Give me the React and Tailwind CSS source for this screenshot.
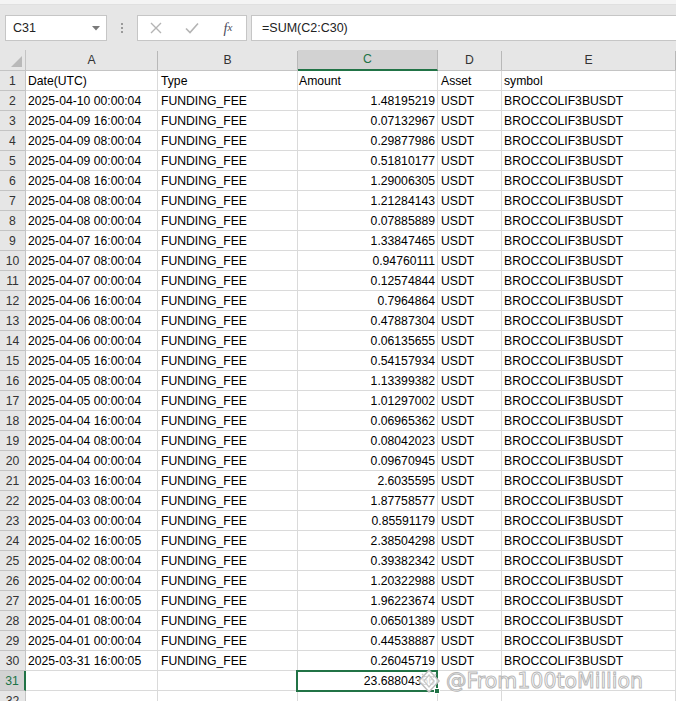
import React from "react";

const data = [
  ["2025-04-10 00:00:04", "1.48195219"],
  ["2025-04-09 16:00:04", "0.07132967"],
  ["2025-04-09 08:00:04", "0.29877986"],
  ["2025-04-09 00:00:04", "0.51810177"],
  ["2025-04-08 16:00:04", "1.29006305"],
  ["2025-04-08 08:00:04", "1.21284143"],
  ["2025-04-08 00:00:04", "0.07885889"],
  ["2025-04-07 16:00:04", "1.33847465"],
  ["2025-04-07 08:00:04", "0.94760111"],
  ["2025-04-07 00:00:04", "0.12574844"],
  ["2025-04-06 16:00:04", "0.7964864"],
  ["2025-04-06 08:00:04", "0.47887304"],
  ["2025-04-06 00:00:04", "0.06135655"],
  ["2025-04-05 16:00:04", "0.54157934"],
  ["2025-04-05 08:00:04", "1.13399382"],
  ["2025-04-05 00:00:04", "1.01297002"],
  ["2025-04-04 16:00:04", "0.06965362"],
  ["2025-04-04 08:00:04", "0.08042023"],
  ["2025-04-04 00:00:04", "0.09670945"],
  ["2025-04-03 16:00:04", "2.6035595"],
  ["2025-04-03 08:00:04", "1.87758577"],
  ["2025-04-03 00:00:04", "0.85591179"],
  ["2025-04-02 16:00:05", "2.38504298"],
  ["2025-04-02 08:00:04", "0.39382342"],
  ["2025-04-02 00:00:04", "1.20322988"],
  ["2025-04-01 16:00:05", "1.96223674"],
  ["2025-04-01 08:00:04", "0.06501389"],
  ["2025-04-01 00:00:04", "0.44538887"],
  ["2025-03-31 16:00:05", "0.26045719"],
];

const cellBase =
  "h-[20px] pt-[1px] border-r border-b border-[#dadada] flex items-center whitespace-nowrap overflow-hidden shrink-0";

function RowHeader({ n, selected }) {
  return selected ? (
    <div className="w-[26px] h-[20px] pt-[1px] shrink-0 bg-[#d2d2d2] border-r-2 border-[#217346] border-b border-b-[#c6c6c6] flex items-center justify-center text-[#217346]">
      {n}
    </div>
  ) : (
    <div className="w-[26px] h-[20px] pt-[1px] shrink-0 bg-[#e6e6e6] border-r border-b border-[#c4c4c4] flex items-center justify-center text-[#333]">
      {n}
    </div>
  );
}

function Row({ n, a, b, c, d, e, selected }) {
  return (
    <div className="flex">
      <RowHeader n={n} selected={selected} />
      <div className={`${cellBase} w-[132px] pl-[2px]`}>{a}</div>
      <div className={`${cellBase} w-[140px] pl-[3px]`}>{b}</div>
      <div className={`${cellBase} w-[140px] justify-end pr-[2px]`}>{c}</div>
      <div className={`${cellBase} w-[64px] pl-[3px]`}>{d}</div>
      <div className={`${cellBase} w-[174px] pl-[2px]`}>{e}</div>
    </div>
  );
}

function ColHeader({ w, label, selected }) {
  return selected ? (
    <div
      className={`${w} h-[21px] shrink-0 bg-[#d2d2d2] border-r border-[#b8b8b8] border-b-2 border-b-[#217346] flex items-center justify-center text-[#217346]`}
    >
      {label}
    </div>
  ) : (
    <div
      className={`${w} h-[21px] shrink-0 flex items-end border-b border-[#c4c4c4]`}
    >
      <div className="w-full h-[19px] border-r border-[#b8b8b8] flex items-center justify-center text-[#333]">
        {label}
      </div>
    </div>
  );
}

export default function App() {
  return (
    <div
      className="w-[676px] h-[701px] overflow-hidden bg-white text-[12.2px] text-black"
      style={{ fontFamily: '"Liberation Sans", Arial, sans-serif' }}
    >
      {/* top strip */}
      <div className="h-[5px] bg-[#f4f4f4] border-b border-[#e0e0e0]" />
      {/* formula bar */}
      <div className="h-[45px] bg-[#e6e6e6] flex items-start pt-[10px] text-[12.5px]">
        <div className="ml-[5px] w-[102px] h-[26px] bg-white border border-[#c6c6c6] flex items-center justify-between pl-[7px] pr-[6px] text-[#222]">
          <span>C31</span>
          <svg width="8" height="5" viewBox="0 0 8 5">
            <path d="M0 0 L8 0 L4 4.5 Z" fill="#7a7a7a" />
          </svg>
        </div>
        <div className="w-[30px] h-[26px] flex flex-col items-center justify-center gap-[2px]">
          <div className="w-[2px] h-[2px] bg-[#9a9a9a]" />
          <div className="w-[2px] h-[2px] bg-[#9a9a9a]" />
          <div className="w-[2px] h-[2px] bg-[#9a9a9a]" />
        </div>
        <div className="w-[110px] h-[26px] bg-white border border-[#c6c6c6] flex items-center">
          <div className="w-[36px] flex justify-center">
            <svg width="12" height="12" viewBox="0 0 12 12">
              <path d="M1 1 L11 11 M11 1 L1 11" stroke="#b4b4b4" strokeWidth="1.4" />
            </svg>
          </div>
          <div className="w-[36px] flex justify-center">
            <svg width="14" height="12" viewBox="0 0 14 12">
              <path d="M1 6.5 L5 10.5 L13 1.5" stroke="#b4b4b4" strokeWidth="1.6" fill="none" />
            </svg>
          </div>
          <div
            className="w-[36px] flex justify-center italic text-[14px] text-[#4a4a5a]"
            style={{ fontFamily: '"Liberation Serif", serif' }}
          >
            f<span className="text-[11px] relative top-[1px]">x</span>
          </div>
        </div>
        <div className="ml-[4px] flex-1 h-[26px] bg-white border border-[#c6c6c6] border-r-0 flex items-center pl-[10px] text-[#222]">
          =SUM(C2:C30)
        </div>
      </div>
      {/* column headers */}
      <div className="flex bg-[#e6e6e6]">
        <div className="w-[26px] h-[21px] shrink-0 border-r border-b border-[#c4c4c4] relative">
          <svg className="absolute right-[3px] bottom-[3px]" width="11" height="11" viewBox="0 0 11 11">
            <path d="M11 0 L11 11 L0 11 Z" fill="#b9b9b9" />
          </svg>
        </div>
        <ColHeader w="w-[132px]" label="A" />
        <ColHeader w="w-[140px]" label="B" />
        <ColHeader w="w-[140px]" label="C" selected />
        <ColHeader w="w-[64px]" label="D" />
        <ColHeader w="w-[174px]" label="E" />
      </div>
      {/* rows */}
      <Row n={1} a="Date(UTC)" b="Type" c={<span className="w-full text-left pl-[1px]">Amount</span>} d="Asset" e="symbol" />
      {data.map((r, i) => (
        <Row
          key={i}
          n={i + 2}
          a={r[0]}
          b="FUNDING_FEE"
          c={r[1]}
          d="USDT"
          e="BROCCOLIF3BUSDT"
        />
      ))}
      <div className="relative">
        <Row n={31} a="" b="" c="23.68804356" d="" e="" selected />
        {/* selection box around C31 */}
        <div className="absolute left-[296px] top-[-1px] w-[142px] h-[22px] border-2 border-[#217346] pointer-events-none" />
        <div className="absolute left-[434px] top-[17px] w-[6px] h-[6px] bg-[#217346] border border-white" />
        {/* watermark */}
        <div className="absolute left-[416px] top-[-3px] flex items-center gap-[4px]">
          <svg width="26" height="26" viewBox="0 0 26 26">
            <path d="M13 2 L23 13 L13 24 L3 13 Z" fill="white" fillOpacity="0.85" stroke="#bdbdbd" strokeWidth="1.5" />
            <path d="M13 7 L18 13 L13 19 L8 13 Z" fill="none" stroke="#c8c8c8" strokeWidth="1.3" />
            <path d="M6 6 L9 9 M20 6 L17 9" stroke="#c8c8c8" strokeWidth="1.3" />
          </svg>
          <span
            className="text-[20.5px] text-white [-webkit-text-stroke:1px_#b8b8b8] leading-none"
            style={{ fontFamily: '"DejaVu Sans", sans-serif' }}
          >
            @From100toMillion
          </span>
        </div>
      </div>
      <Row n={32} a="" b="" c="" d="" e="" />
    </div>
  );
}
